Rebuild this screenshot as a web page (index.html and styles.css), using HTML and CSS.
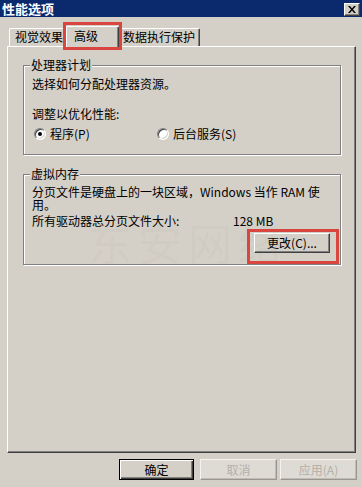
FILE: index.html
```html
<!DOCTYPE html>
<html lang="zh-CN">
<head>
<meta charset="utf-8">
<title>性能选项</title>
<link rel="stylesheet" href="styles.css">
</head>
<body>
<div class="window">
  <div class="titlebar">
    <span class="title">性能选项</span>
    <span class="close"><svg width="8" height="7" viewBox="0 0 8 7"><path d="M0 0h2l2 2.5L6 0h2L5 3.5 8 7H6L4 4.5 2 7H0l3-3.5z" fill="#000"/></svg></span>
  </div>
  <div class="tabs">
    <div class="tab t1">视觉效果</div>
    <div class="tab sel">高级</div>
    <div class="tab t3">数据执行保护</div>
  </div>
  <div class="panel">
    <div class="group g1">
      <div class="legend">处理器计划</div>
      <div class="line l1">选择如何分配处理器资源。</div>
      <div class="line l2">调整以优化性能:</div>
      <div class="radios">
        <div class="opt o1"><span class="radio"><span class="dot"></span></span><span>程序(P)</span></div>
        <div class="opt"><span class="radio"></span><span>后台服务(S)</span></div>
      </div>
    </div>
    <div class="group g2">
      <div class="legend">虚拟内存</div>
      <div class="para">
        <div class="para-line">分页文件是硬盘上的一块区域，Windows 当作 RAM 使</div>
        <div class="para-line">用。</div>
      </div>
      <div class="size-row"><span class="size-label">所有驱动器总分页文件大小:</span><span>128 MB</span></div>
      <div class="btn change">更改(C)...</div>
    </div>
  </div>
  <div class="buttons">
    <div class="btn default">确定</div>
    <div class="btn faded cancel">取消</div>
    <div class="btn faded apply">应用(A)</div>
  </div>
  <div class="watermark">东安网络</div>
  <div class="mark mark-tab"></div>
  <div class="mark mark-btn"></div>
</div>
</body>
</html>
```

FILE: styles.css
```css
html, body {
  margin: 0;
  padding: 0;
  background: #d4d0c8;
}
.window {
  position: relative;
  width: 362px;
  height: 487px;
  overflow: hidden;
  background: #d4d0c8;
  font-family: "Noto Sans CJK SC", sans-serif;
  font-size: 12px;
  line-height: 12px;
  color: #000;
}
.titlebar {
  height: 17px;
  background: #0b2a6e;
  display: flex;
  justify-content: space-between;
  align-items: flex-start;
  padding: 0 2px 0 2px;
}
.title {
  color: #fff;
  font-weight: bold;
  font-size: 13px;
  line-height: 17px;
}
.close {
  box-sizing: border-box;
  margin-top: 3px;
  width: 16px;
  height: 13px;
  background: #d4d0c8;
  border: 1px solid;
  border-color: #fff #404040 #404040 #fff;
  box-shadow: inset -1px -1px 0 #808080;
  display: flex;
  align-items: center;
  justify-content: center;
}
.close svg { display: block; margin: 0 1px 1px 0; }
.tabs {
  display: flex;
  align-items: flex-end;
  height: 20px;
  margin-top: 9px;
  padding-left: 9px;
}
.tab {
  box-sizing: border-box;
  height: 18px;
  border-top: 1px solid #fff;
  border-left: 1px solid #fff;
  border-right: 1px solid #404040;
  box-shadow: inset -1px 0 0 #808080;
  border-radius: 2px 2px 0 0;
  padding: 2px 0 0 5px;
  background: #d4d0c8;
  white-space: nowrap;
}
.t1 { width: 59px; }
.sel {
  position: relative;
  z-index: 2;
  width: 53px;
  height: 21px;
  margin: 0 -2px -1px -2px;
  padding: 3px 0 0 7px;
}
.t3 { width: 83px; }
.panel {
  box-sizing: border-box;
  margin-left: 7px;
  width: 349px;
  height: 407px;
  border: 1px solid;
  border-color: #fff #404040 #404040 #fff;
  box-shadow: inset -1px -1px 0 #808080;
  padding: 18px 14px 0 15px;
}
.group {
  box-sizing: border-box;
  border: 1px solid #808080;
  box-shadow: inset 1px 1px 0 #fff, 1px 1px 0 #fff;
  padding: 0 8px;
}
.g1 { height: 90px; }
.g2 { height: 91px; margin-top: 19px; }
.legend {
  width: fit-content;
  margin: -7px 0 0 -2px;
  padding: 0 1px;
  background: #d4d0c8;
}
.l1 { margin-top: 7px; }
.l2 { margin-top: 18px; }
.radios {
  display: flex;
  align-items: center;
  height: 12px;
  margin-top: 8px;
}
.opt {
  display: flex;
  align-items: center;
  gap: 4px;
}
.o1 { width: 123px; margin-left: 2px; }
.radio {
  box-sizing: border-box;
  width: 12px;
  height: 12px;
  border-radius: 50%;
  background: #fff;
  border: 1px solid;
  border-color: #808080 #fff #fff #808080;
  box-shadow: inset 1px 1px 0 #404040, inset -1px -1px 0 #d4d0c8;
  display: flex;
  align-items: center;
  justify-content: center;
}
.dot {
  width: 4px;
  height: 4px;
  border-radius: 50%;
  background: #000;
}
.para {
  margin-top: 5px;
  line-height: 13px;
  white-space: nowrap;
}
.size-row {
  display: flex;
  margin-top: 4px;
  white-space: nowrap;
}
.size-label { width: 201px; }
.btn {
  box-sizing: border-box;
  height: 20px;
  background: #d4d0c8;
  border: 1px solid;
  border-color: #fff #404040 #404040 #fff;
  box-shadow: inset -1px -1px 0 #808080;
  display: flex;
  align-items: center;
  justify-content: center;
  white-space: nowrap;
}
.change {
  width: 76px;
  margin: 6px 0 0 222px;
}
.buttons {
  display: flex;
  margin-top: 6px;
  padding-left: 119px;
}
.buttons .btn { height: 21px; }
.default {
  width: 75px;
  border-color: #000;
  box-shadow: inset 1px 1px 0 #fff, inset -1px -1px 0 #404040, inset -2px -2px 0 #808080;
}
.faded {
  background: #dedbd5;
  color: #b4b0a8;
  border-color: #f4f3f0 #9a968f #9a968f #f4f3f0;
  box-shadow: inset -1px -1px 0 #c0bcb4;
}
.cancel { width: 77px; margin-left: 6px; }
.apply { width: 77px; margin-left: 3px; }
.watermark {
  position: absolute;
  left: 88px;
  top: 218px;
  font-size: 44px;
  line-height: 48px;
  letter-spacing: 6px;
  color: rgba(110, 100, 90, 0.05);
  pointer-events: none;
}
.mark {
  position: absolute;
  box-sizing: border-box;
  border: 3px solid #d9453f;
  pointer-events: none;
}
.mark-tab { left: 63px; top: 22px; width: 59px; height: 28px; }
.mark-btn { left: 247px; top: 229px; width: 92px; height: 35px; }
```
